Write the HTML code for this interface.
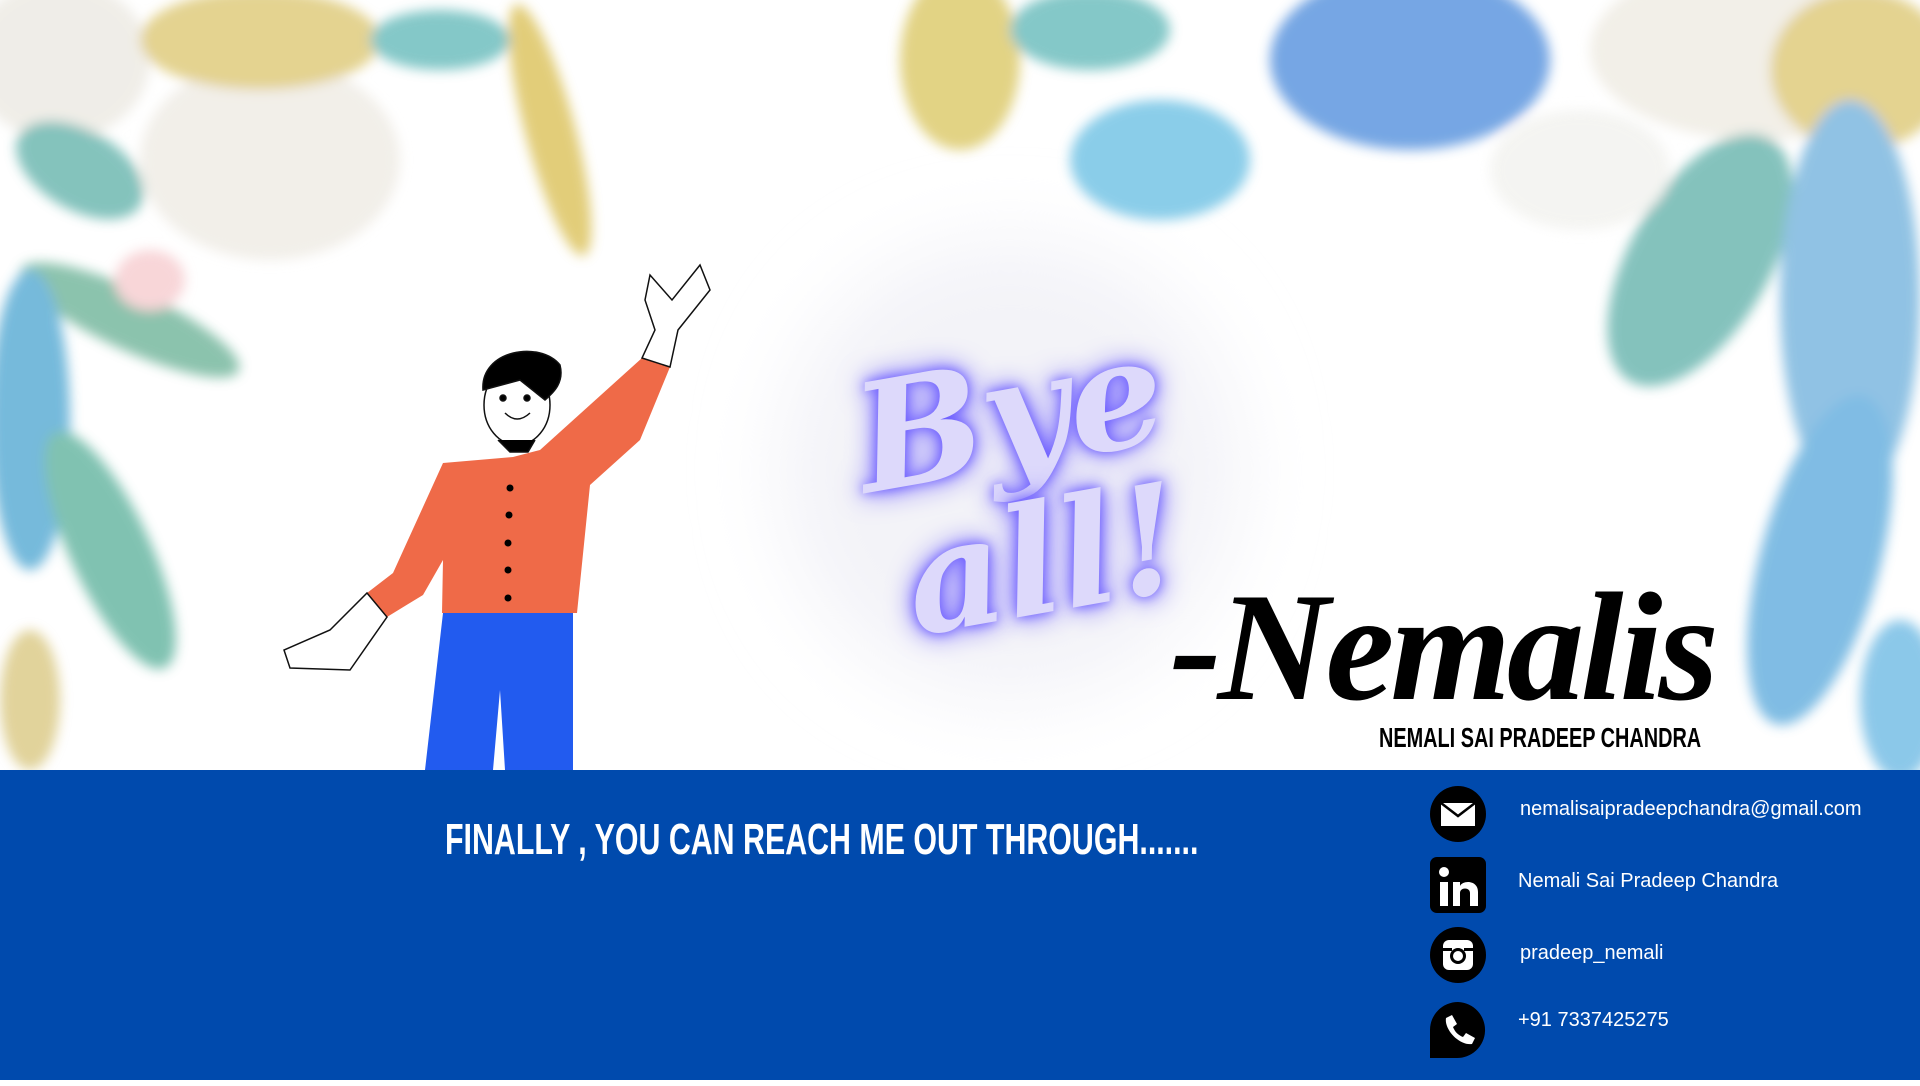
<!DOCTYPE html>
<html><head><meta charset="utf-8"><style>
*{margin:0;padding:0}
body{width:1920px;height:1080px;overflow:hidden;background:#fff;position:relative;font-family:"Liberation Sans",sans-serif}
.band{position:absolute;left:0;top:770px;width:1920px;height:310px;background:#004aad}
.t{position:absolute;white-space:nowrap}
</style></head><body>
<svg width="1920" height="1080" style="position:absolute;left:0;top:0">
<defs>
<filter id="b" x="-50%" y="-50%" width="200%" height="200%"><feGaussianBlur stdDeviation="6"/></filter>
<filter id="b2" x="-50%" y="-50%" width="200%" height="200%"><feGaussianBlur stdDeviation="40"/></filter>
</defs>
<ellipse cx="1010" cy="470" rx="230" ry="230" fill="#f3f3f8" filter="url(#b2)"/>
<g filter="url(#b)" opacity="0.7">
<ellipse cx="60" cy="60" rx="90" ry="80" fill="#e9e6de"/>
<ellipse cx="270" cy="160" rx="130" ry="100" fill="#ece8e0"/>
<ellipse cx="260" cy="40" rx="120" ry="50" fill="#d8c060"/>
<ellipse cx="80" cy="170" rx="70" ry="40" fill="#4fa9a0" transform="rotate(30 80 170)"/>
<ellipse cx="130" cy="320" rx="120" ry="30" fill="#5aa98a" transform="rotate(25 130 320)"/>
<ellipse cx="30" cy="420" rx="40" ry="150" fill="#3a9ccc"/>
<ellipse cx="110" cy="550" rx="40" ry="130" fill="#4aa890" transform="rotate(-25 110 550)"/>
<ellipse cx="30" cy="700" rx="30" ry="70" fill="#d4c070"/>
<ellipse cx="550" cy="130" rx="25" ry="130" fill="#d6b840" transform="rotate(-15 550 130)"/>
<ellipse cx="440" cy="40" rx="70" ry="30" fill="#4fb0b0"/>
<ellipse cx="150" cy="280" rx="35" ry="30" fill="#f5c4c8"/>
<ellipse cx="1410" cy="60" rx="140" ry="90" fill="#3a80d8"/>
<ellipse cx="1760" cy="50" rx="170" ry="90" fill="#ece8de"/>
<ellipse cx="1860" cy="70" rx="90" ry="80" fill="#d8c060"/>
<ellipse cx="1160" cy="160" rx="90" ry="60" fill="#58b8e0"/>
<ellipse cx="960" cy="60" rx="60" ry="90" fill="#d6c050"/>
<ellipse cx="1090" cy="30" rx="80" ry="40" fill="#4fb0b0"/>
<ellipse cx="1700" cy="260" rx="70" ry="140" fill="#4fa8a0" transform="rotate(30 1700 260)"/>
<ellipse cx="1850" cy="300" rx="70" ry="200" fill="#60a8d8"/>
<ellipse cx="1820" cy="560" rx="60" ry="170" fill="#4aa0d8" transform="rotate(15 1820 560)"/>
<ellipse cx="1900" cy="700" rx="40" ry="80" fill="#5ab0e0"/>
<ellipse cx="1580" cy="170" rx="90" ry="60" fill="#f0f0ec"/>
</g>
<g stroke="#111" stroke-width="1.5">
<path d="M443,613 L573,613 L573,770 L505,770 L500,690 L493,770 L425,770 Z" fill="#225bef" stroke="none"/>
<path d="M367,593 L393,573 L443,463 L513,457 L540,450 L642,358 L670,367 L640,440 L590,485 L577,613 L442,613 L443,560 L423,595 L387,617 Z" fill="#ef6a48" stroke="none"/>
<path d="M642,358 L670,367 L678,330 L710,290 L700,265 L672,300 L650,275 L645,300 L655,330 Z" fill="#fff"/>
<path d="M367,593 L387,617 L350,670 L290,668 L284,650 L330,630 Z" fill="#fff"/>
<ellipse cx="517" cy="405" rx="33" ry="40" fill="#fff"/>
<path d="M483,390 C480,350 540,340 560,365 C565,385 550,395 545,400 L520,380 Z" fill="#000"/>
<path d="M498,440 L510,452 L528,452 L535,440" fill="#000"/>
<circle cx="503" cy="398" r="3" fill="#000"/><circle cx="527" cy="398" r="3" fill="#000"/>
<path d="M505,413 Q517,425 530,413" fill="#fff"/>
</g>
<g fill="#000"><circle cx="510" cy="488" r="3.5"/><circle cx="509" cy="515" r="3.5"/><circle cx="508" cy="543" r="3.5"/><circle cx="508" cy="570" r="3.5"/><circle cx="508" cy="598" r="3.5"/></g>
</svg>
<div class="t" style="left:855px;top:340px;font:italic bold 150px/1 'DejaVu Serif',serif;color:#ddd9fb;text-shadow:0 0 12px #6b5cff,0 0 28px #5a48ff;transform:rotate(-10deg)">Bye</div>
<div class="t" style="left:905px;top:485px;font:italic bold 150px/1 'DejaVu Serif',serif;color:#ddd9fb;text-shadow:0 0 12px #6b5cff,0 0 28px #5a48ff;transform:rotate(-10deg)">all!</div>
<div class="t" style="left:1170px;top:570px;font:italic bold 155px/1 'Liberation Serif',serif;color:#000;letter-spacing:-4px">-Nemalis</div>
<div class="t" style="left:1379px;top:724px;font:bold 28px/1 'Liberation Sans',sans-serif;color:#000;transform:scaleX(0.71);transform-origin:left">NEMALI SAI PRADEEP CHANDRA</div>
<div class="band"></div>
<div class="t" style="left:445px;top:818px;font:bold 44px/1 'Liberation Sans',sans-serif;color:#fff;transform:scaleX(0.69);transform-origin:left">FINALLY , YOU CAN REACH ME OUT THROUGH.......</div>
<svg width="60" height="300" style="position:absolute;left:1430px;top:786px">
<circle cx="28" cy="28" r="28" fill="#000"/>
<rect x="11" y="17" width="34" height="23" fill="#fff"/><path d="M11,17 L28,30 L45,17" stroke="#000" stroke-width="2.5" fill="none"/>
<rect x="0" y="71" width="56" height="56" rx="7" fill="#000"/>
<rect x="10" y="96" width="8" height="24" fill="#fff"/><circle cx="14" cy="86" r="5" fill="#fff"/>
<path d="M23,96 h7 v4 c3,-6 18,-6 18,6 v14 h-8 v-13 c0,-6 -10,-6 -10,0 v13 h-7 z" fill="#fff"/>
<circle cx="28" cy="169" r="28" fill="#000"/>
<rect x="13" y="154" width="30" height="30" rx="6" fill="#fff"/><circle cx="28" cy="170" r="8" fill="#000"/><circle cx="28" cy="170" r="5" fill="#fff"/><rect x="13" y="162" width="9" height="3" fill="#000"/><rect x="34" y="162" width="9" height="3" fill="#000"/>
<path d="M28,216 a28,28 0 1 1 -2,56 l-26,0 l0,-28 a28,28 0 0 1 28,-28z" fill="#000"/>
<path d="M16,232 l6,-3 l5,9 l-4,3 c2,5 5,8 10,10 l3,-4 l9,5 l-3,6 c-12,2 -28,-14 -26,-26z" fill="#fff"/>
</svg>
<div class="t" style="left:1520px;top:798px;font:20px 'Liberation Sans',sans-serif;color:#fff">nemalisaipradeepchandra@gmail.com</div>
<div class="t" style="left:1518px;top:870px;font:20px 'Liberation Sans',sans-serif;color:#fff">Nemali Sai Pradeep Chandra</div>
<div class="t" style="left:1520px;top:942px;font:20px 'Liberation Sans',sans-serif;color:#fff">pradeep_nemali</div>
<div class="t" style="left:1518px;top:1009px;font:20px 'Liberation Sans',sans-serif;color:#fff">+91 7337425275</div>
</body></html>
